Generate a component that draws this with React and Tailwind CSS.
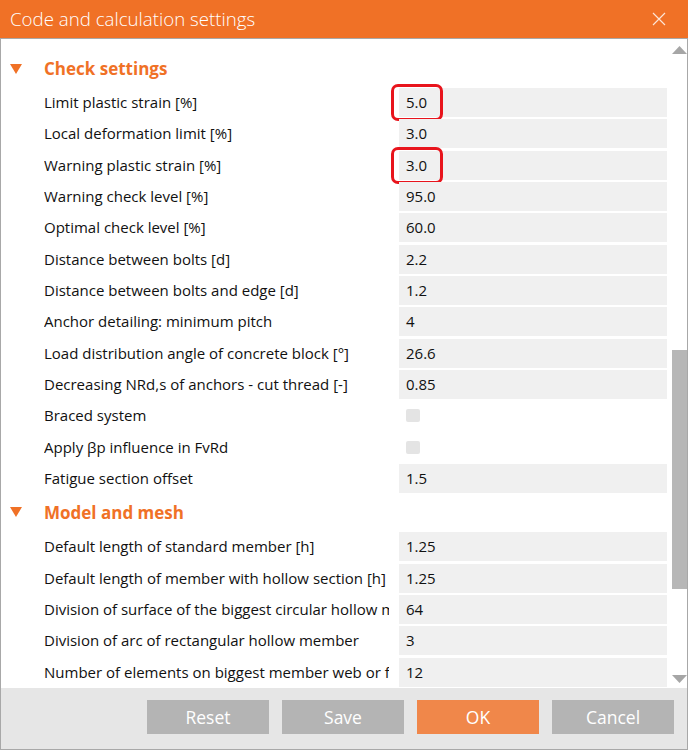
import React from "react";

const checkRows = [
  ["Limit plastic strain [%]", "5.0", "mark"],
  ["Local deformation limit [%]", "3.0"],
  ["Warning plastic strain [%]", "3.0", "mark"],
  ["Warning check level [%]", "95.0"],
  ["Optimal check level [%]", "60.0"],
  ["Distance between bolts [d]", "2.2"],
  ["Distance between bolts and edge [d]", "1.2"],
  ["Anchor detailing: minimum pitch", "4"],
  ["Load distribution angle of concrete block [°]", "26.6"],
  ["Decreasing NRd,s of anchors - cut thread [-]", "0.85"],
  ["Braced system", null, "check"],
  ["Apply βp influence in FvRd", null, "check"],
  ["Fatigue section offset", "1.5"],
];

const meshRows = [
  ["Default length of standard member [h]", "1.25"],
  ["Default length of member with hollow section [h]", "1.25"],
  ["Division of surface of the biggest circular hollow member", "64"],
  ["Division of arc of rectangular hollow member", "3"],
  ["Number of elements on biggest member web or flange", "12"],
  ["", ""],
];

function Row({ label, value, kind }) {
  return (
    <div className="flex h-[31.33px] shrink-0 items-start">
      <div className="ml-[43px] w-[345px] overflow-hidden whitespace-nowrap text-[15px] leading-[29px] text-[#111]">
        {label}
      </div>
      {kind === "check" ? (
        <div className="ml-[10px] flex h-[29px] w-[268px] items-center pl-[7px]">
          <div className="h-[13px] w-[14px] rounded-[2px] bg-[#e4e4e4]" />
        </div>
      ) : (
        <div className="relative ml-[10px] h-[29px] w-[268px] bg-[#f0f0f0] pl-[7px] text-[15px] leading-[29px] text-[#111]">
          {value}
          {kind === "mark" && (
            <div className="absolute left-[-8px] top-[-4px] h-[37px] w-[52px] rounded-[7px] border-[3px] border-[#e8141c]" />
          )}
        </div>
      )}
    </div>
  );
}

function Section({ title, tall }) {
  return (
    <div className={"flex shrink-0 items-center " + (tall ? "h-[38px]" : "h-[37px] pb-[3px]")}>
      <svg width="12" height="10" viewBox="0 0 12 10" className="ml-[9px]">
        <path d="M0 0 H12 L6 10 Z" fill="#f07126" />
      </svg>
      <span className="ml-[22px] text-[17px] font-bold text-[#f07126]">{title}</span>
    </div>
  );
}

export default function App() {
  return (
    <div
      className="flex h-[750px] w-[688px] flex-col overflow-hidden bg-white"
      style={{ fontFamily: '"Open Sans", "Noto Sans", sans-serif' }}
    >
      {/* title bar */}
      <div className="flex h-[38px] shrink-0 items-center justify-between bg-[#f07126] pl-[10px] pr-[22px]">
        <span className="text-[18.7px] font-light text-white">Code and calculation settings</span>
        <svg width="14" height="14" viewBox="0 0 14 14">
          <path d="M1 1 L13 13 M13 1 L1 13" stroke="#fde5d6" strokeWidth="1.2" />
        </svg>
      </div>

      {/* settings list */}
      <div className="flex h-[650px] shrink-0 border-x border-t border-[#a8a8a8]">
        <div className="flex min-w-0 flex-1 flex-col overflow-hidden pt-[11px]">
          <Section title="Check settings" tall />
          {checkRows.map(([l, v, k], i) => (
            <Row key={i} label={l} value={v} kind={k} />
          ))}
          <Section title="Model and mesh" />
          {meshRows.map(([l, v, k], i) => (
            <Row key={i} label={l} value={v} kind={k} />
          ))}
        </div>
        {/* scrollbar */}
        <div className="flex w-[15px] shrink-0 flex-col items-center">
          <svg width="15" height="8" viewBox="0 0 15 8" className="mt-[7px]">
            <path d="M0 8 L7.5 0 L15 8 Z" fill="#a6a6a6" />
          </svg>
          <div className="mt-[296px] h-[239px] w-[15px] bg-[#b7b7b7]" />
          <svg width="15" height="8" viewBox="0 0 15 8" className="mt-[86px]">
            <path d="M0 0 L15 0 L7.5 8 Z" fill="#a6a6a6" />
          </svg>
        </div>
      </div>

      {/* buttons */}
      <div className="flex flex-1 items-start justify-end gap-[13px] border-x border-b border-[#a8a8a8] bg-[#e6e6e6] pr-[13px] pt-[12px]">
        {["Reset", "Save", "OK", "Cancel"].map((b) => (
          <div
            key={b}
            className={
              "flex h-[34px] w-[122px] items-center justify-center text-[17.5px] text-white " +
              (b === "OK" ? "bg-[#f0874a]" : "bg-[#b4b4b4]")
            }
          >
            {b}
          </div>
        ))}
      </div>
    </div>
  );
}
